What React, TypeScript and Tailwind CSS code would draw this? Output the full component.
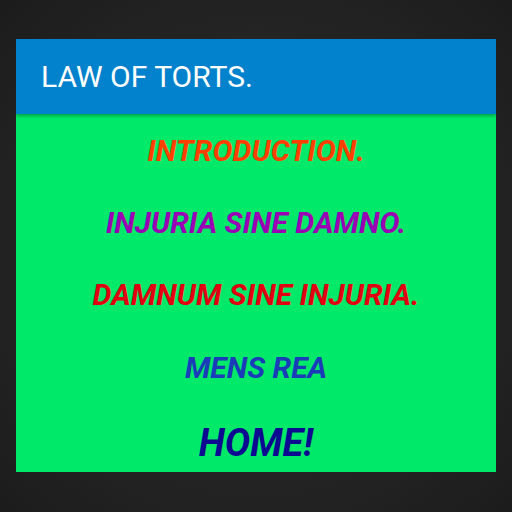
import React from "react";

const items = [
  { t: "INTRODUCTION.", c: "text-[#ff4000]", s: "text-[30px] h-[72px]" },
  { t: "INJURIA SINE DAMNO.", c: "text-[#9a00b4]", s: "text-[30px] h-[72px]" },
  { t: "DAMNUM SINE INJURIA.", c: "text-[#e00010]", s: "text-[30px] h-[73px]" },
  { t: "MENS REA", c: "text-[#1a3cb8]", s: "text-[30px] h-[73px]" },
  { t: "HOME!", c: "text-[#0c0a90]", s: "text-[38px] h-[78px]" },
];

export default function App() {
  return (
    <div className="w-[512px] h-[512px] bg-[radial-gradient(circle_at_center,#2e2e2e_0%,#262626_50%,#1c1c1c_100%)] pt-[39px] px-4 font-['Roboto',sans-serif]">
      <div className="w-[480px] h-[433px] bg-[#00e968] flex flex-col overflow-hidden">
        <div className="h-[75px] shrink-0 bg-[#0282cc] flex items-center pl-[25px] shadow-[0_2px_3px_rgba(0,0,0,0.3)] relative z-10">
          <span className="text-white text-[30px] font-normal leading-none">LAW OF TORTS.</span>
        </div>
        <div className="flex flex-col items-center">
          {items.map((it, i) => (
            <div key={i} className={`shrink-0 flex items-center justify-center font-bold italic ${it.c} ${it.s}`}>
              {it.t}
            </div>
          ))}
        </div>
      </div>
    </div>
  );
}
